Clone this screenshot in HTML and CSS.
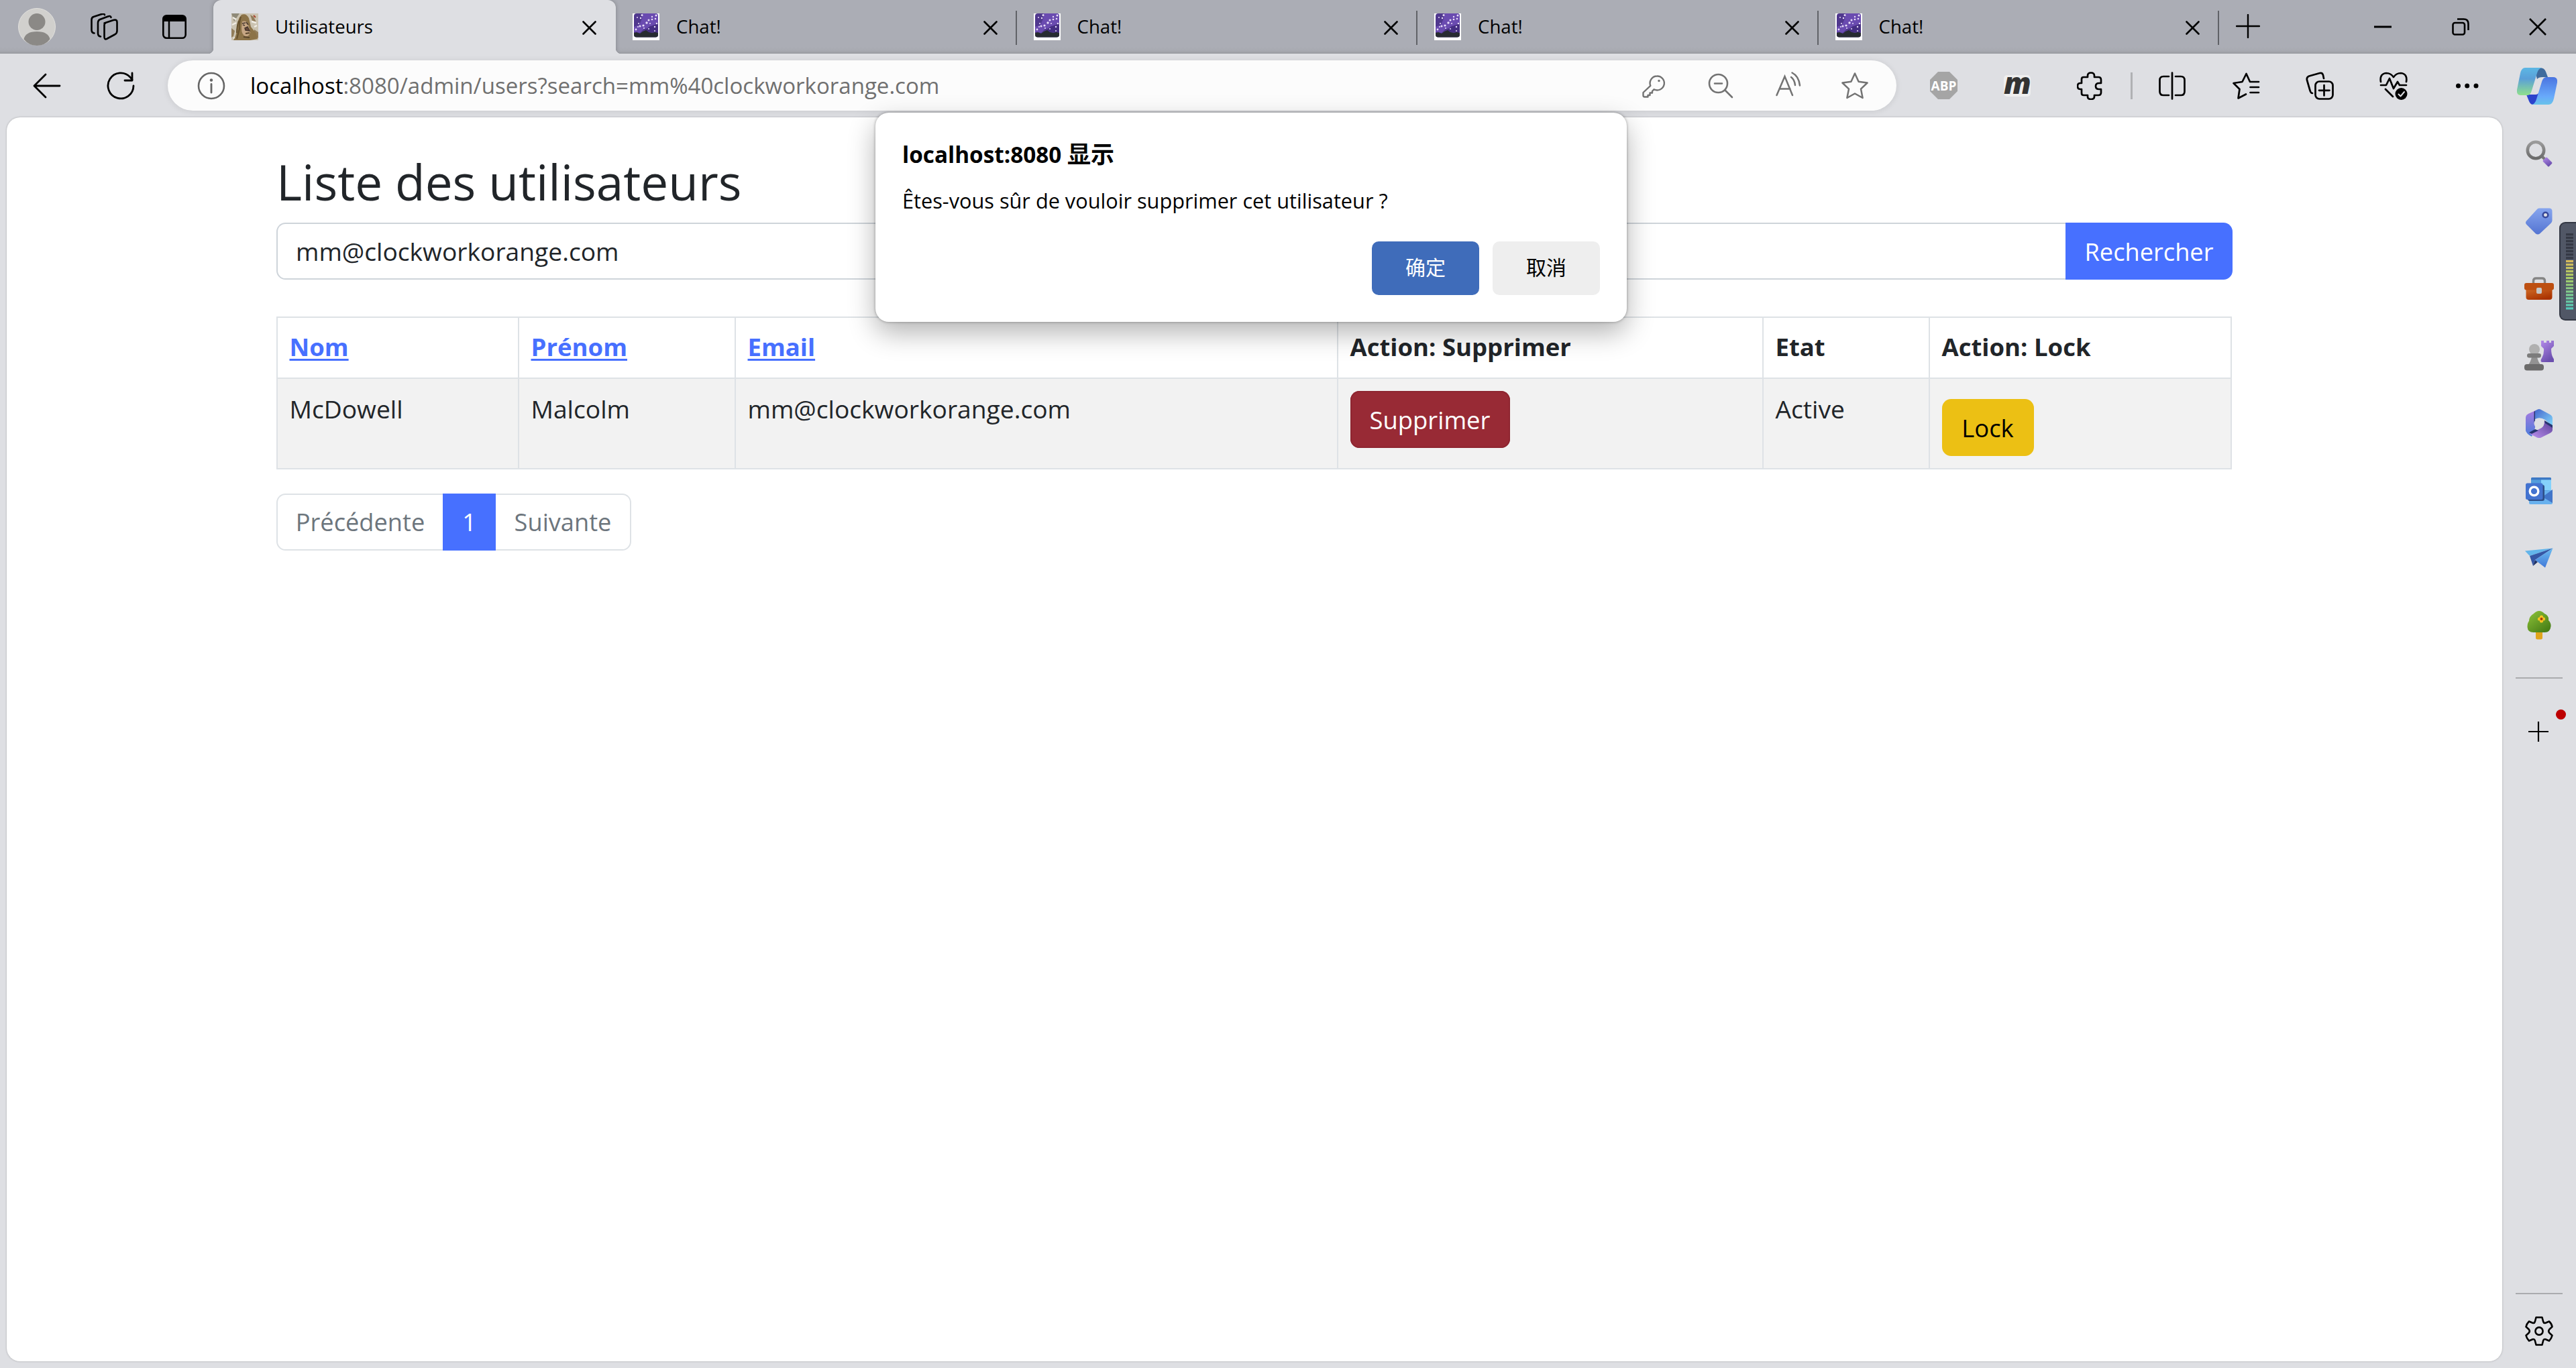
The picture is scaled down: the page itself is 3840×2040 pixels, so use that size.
FILE: index.html
```html
<!DOCTYPE html>
<html lang="fr">
<head>
<meta charset="utf-8">
<title>Utilisateurs</title>
<link rel="stylesheet" href="styles.css">
</head>
<body>
<svg class="defs" aria-hidden="true">
  <defs>
    <linearGradient id="violet" x1="0" y1="0" x2="0.5" y2="1"><stop offset="0" stop-color="#b48bea"/><stop offset="1" stop-color="#6b4fae"/></linearGradient>
    <linearGradient id="grey" x1="0" y1="0" x2="0" y2="1"><stop offset="0" stop-color="#9b9b9b"/><stop offset="1" stop-color="#6b6b6b"/></linearGradient>
    <linearGradient id="blue" x1="0" y1="0" x2="0" y2="1"><stop offset="0" stop-color="#86a5ee"/><stop offset="1" stop-color="#5474d2"/></linearGradient>
    <linearGradient id="orange" x1="0" y1="0" x2="0.6" y2="1"><stop offset="0" stop-color="#cf6a26"/><stop offset="1" stop-color="#a93200"/></linearGradient>
    <linearGradient id="leaf" x1="0" y1="0" x2="0.8" y2="1"><stop offset="0" stop-color="#8fc33a"/><stop offset="1" stop-color="#467d15"/></linearGradient>
    <linearGradient id="plane" x1="0" y1="0" x2="0" y2="1"><stop offset="0" stop-color="#6bbcf0"/><stop offset="1" stop-color="#4279d8"/></linearGradient>
    <linearGradient id="copA" x1="0" y1="0" x2="0" y2="1"><stop offset="0" stop-color="#5cb7e4"/><stop offset="0.4" stop-color="#5a9fd8"/><stop offset="1" stop-color="#8fe08c"/></linearGradient>
    <linearGradient id="copB" x1="0" y1="0" x2="0" y2="1"><stop offset="0" stop-color="#4a74e0"/><stop offset="0.7" stop-color="#68a9fb"/><stop offset="1" stop-color="#68c3ea"/></linearGradient>
    <linearGradient id="hexA" x1="0" y1="0" x2="0" y2="1"><stop offset="0" stop-color="#a67be0"/><stop offset="1" stop-color="#4a7cdb"/></linearGradient>
    <linearGradient id="hexB" x1="0" y1="0" x2="1" y2="1"><stop offset="0" stop-color="#4465cc"/><stop offset="1" stop-color="#84dafc"/></linearGradient>
    <linearGradient id="hexC" x1="0" y1="1" x2="1" y2="0"><stop offset="0" stop-color="#bd92f0"/><stop offset="1" stop-color="#5a3f98"/></linearGradient>
    <linearGradient id="meter" x1="0" y1="0" x2="0" y2="1"><stop offset="0" stop-color="#d9b95a"/><stop offset="0.35" stop-color="#a8cc66"/><stop offset="1" stop-color="#51c9bb"/></linearGradient>
    <symbol id="chat-icon" viewBox="0 0 40 40">
      <rect width="40" height="40" fill="#fff"/>
      <rect x="2" y="0" width="36" height="35.500" rx="4" fill="#50388e"/>
      <path d="M14 0h20q4 0 4 4v14l-7-1-6 5-8 1-6 6-9-1v-8l8-3 4-9z" fill="#6a4bb0"/>
      <path d="M14 29l6-5 6-5 6-1 6-5v15H14z" fill="#452e82"/>
      <path d="M2 29l4-1 5 2 4-3 5-2 4 3 5 1 5-1 4 1v3q0 3.500-4 3.500H6q-4 0-4-3.500z" fill="#272b31"/>
      <g fill="#e9def9"><circle cx="14" cy="2.500" r="1.500"/><circle cx="7" cy="6" r="1"/><circle cx="12" cy="7" r="1.200"/><circle cx="35" cy="3" r="1.500"/><circle cx="29" cy="5" r="1.200"/><circle cx="34" cy="8" r="1.300"/><circle cx="24" cy="10" r="1.500"/><circle cx="29" cy="9" r="1.300"/><circle cx="21" cy="14" r="1.700"/><circle cx="16" cy="18" r="1.600"/><circle cx="26" cy="15" r="1"/><circle cx="11" cy="19" r="1.500"/><circle cx="17" cy="22" r="1"/><circle cx="5" cy="24" r="1.400"/><circle cx="8" cy="20" r="1"/><circle cx="33" cy="20" r="1.200"/><circle cx="24" cy="23" r="1"/><circle cx="33" cy="26" r="1"/><circle cx="36" cy="15" r="1.300"/><circle cx="9" cy="15" r="1"/></g>
    </symbol>
    <symbol id="close-icon" viewBox="0 0 21 21"><path d="M1.500 1.500l18 18M19.500 1.500l-18 18" stroke="#000" stroke-width="2.600" stroke-linecap="round" fill="none"/></symbol>
  </defs>
</svg>

<header class="tabstrip">
  <div class="tabstrip-tools">
    <svg width="56" height="58" viewBox="0 0 56 58"><circle cx="28" cy="29" r="27.500" fill="#d1d0cd" stroke="#e2e1de"/><circle cx="28" cy="21.500" r="12.500" fill="#8b8986"/><path d="M8.500 47.500Q11 36 28 36t19.500 11.500Q40 57 28 57T8.500 47.500z" fill="#8b8986"/></svg>
    <svg width="41" height="40" viewBox="0 0 41 40" fill="none" stroke="#000" stroke-width="2.600" stroke-linecap="round" stroke-linejoin="round"><path d="M20.500 14.500L34 10q5.500-1.500 5.500 3v13q0 4-3.500 5.500L24 38q-3.500 1.500-3.500-3V17q0-1.800 1.500-2.500z"/><path d="M15 34.500q-4-.5-4-5V14q0-3.500 3-5l12-4.500q4-1.500 4.500 1.500"/><path d="M5.500 29.500q-4-.5-4-5V9.500q0-3.500 3-4.500L16 1.200q4.500-1.200 5 1"/></svg>
    <svg width="36" height="36" viewBox="0 0 36 36"><rect x="1.300" y="1.300" width="33.400" height="33.400" rx="5" fill="none" stroke="#000" stroke-width="2.600"/><path d="M1 10V6q0-5 5-5h24q5 0 5 5v4z"/><path d="M10 9v26" stroke="#000" stroke-width="2.500"/></svg>
  </div>
  <div class="tab tab-active">
    <svg class="favicon" viewBox="0 0 40 40"><rect width="40" height="40" fill="#cbc3b1"/><path d="M0 0h12L4 12z" fill="#8f8a79"/><path d="M28 2l5 3 4 8-6-2zM34 24l6 4v9l-7-5zM0 22l5 4-2 8-3 2z" fill="#927d5a"/><path d="M2 6l5 3M30 12l7 2M1 17l6-3M34 20l4-2M3 37l8-2" stroke="#f1eee6" stroke-width="2.500"/><path d="M33 3l3 3M35 34l3 2" stroke="#a8452f" stroke-width="2"/><path d="M15 2q7-3 11 5l3 13 8 10 2 8-11 2H3q5-8 5-18 1-14 7-20z" fill="#8c7348"/><path d="M14 5q-3 10-2 18l-4 15M11 11q-3 8-3 18" stroke="#66512e" stroke-width="2" fill="none"/><path d="M16 12q7-2 9 5l3 10q-1 8-7 7-6-2-6-12z" fill="#c6a684"/><path d="M16 15l5-1M17 17l3 1M22 13l3 4M20 22l4-2 3 6-6-1z" stroke="#47382f" stroke-width="1.500" fill="#6a4939"/><path d="M21 30l6-1M18 35l9 1" stroke="#59452b" stroke-width="2"/></svg>
    <span class="tab-title">Utilisateurs</span>
    <svg class="tab-close"><use href="#close-icon"/></svg>
  </div>
  <div class="tab"><svg class="favicon"><use href="#chat-icon"/></svg><span class="tab-title">Chat!</span><svg class="tab-close"><use href="#close-icon"/></svg></div>
  <div class="tab"><svg class="favicon"><use href="#chat-icon"/></svg><span class="tab-title">Chat!</span><svg class="tab-close"><use href="#close-icon"/></svg></div>
  <div class="tab"><svg class="favicon"><use href="#chat-icon"/></svg><span class="tab-title">Chat!</span><svg class="tab-close"><use href="#close-icon"/></svg></div>
  <div class="tab"><svg class="favicon"><use href="#chat-icon"/></svg><span class="tab-title">Chat!</span><svg class="tab-close"><use href="#close-icon"/></svg></div>
  <svg class="new-tab" width="36" height="36" viewBox="0 0 36 36"><path d="M1 18h34M18 1v34" stroke="#000" stroke-width="2.400" stroke-linecap="round"/></svg>
  <div class="window-controls">
    <svg width="26" height="26" viewBox="0 0 26 26"><path d="M0 13h26" stroke="#000" stroke-width="3"/></svg>
    <svg width="26" height="26" viewBox="0 0 26 26" fill="none" stroke="#000" stroke-width="2.600"><rect x="1.500" y="7" width="17.500" height="17.500" rx="3"/><path d="M8 1.500h9.500q7 0 7 7V18"/></svg>
    <svg width="26" height="26" viewBox="0 0 26 26"><path d="M1 1l24 24M25 1L1 25" stroke="#000" stroke-width="2.600"/></svg>
  </div>
</header>

<div class="toolbar">
  <div class="nav">
    <svg width="42" height="38" viewBox="0 0 42 38" fill="none" stroke="#000" stroke-width="2.800" stroke-linecap="round" stroke-linejoin="round"><path d="M19 2L2 19l17 17M2 19h38"/></svg>
    <svg width="42" height="42" viewBox="0 0 42 42" fill="none" stroke="#000" stroke-width="2.800" stroke-linecap="round" stroke-linejoin="round"><path d="M40 21a19 19 0 1 1-5-13l3 4"/><path d="M38 2v11H27"/></svg>
  </div>
  <div class="address">
    <svg width="42" height="42" viewBox="0 0 42 42"><circle cx="21" cy="21" r="19" fill="none" stroke="#666" stroke-width="2.600"/><circle cx="21" cy="12.500" r="2.200" fill="#666"/><path d="M21 18.500v12.500" stroke="#666" stroke-width="2.800" stroke-linecap="round"/></svg>
    <span class="url"><b>localhost</b>:8080/admin/users?search=mm%40clockworkorange.com</span>
    <div class="address-icons">
      <svg width="34" height="34" viewBox="0 0 34 34" fill="none" stroke="#737373" stroke-width="2.400" stroke-linejoin="round"><path d="M22 1.500a10.500 10.500 0 1 1-4.500 19.800L15 24v2.500h-3.500V30H8.500v2.500h-5q-2 0-2-2V26L12.300 15.800A10.500 10.500 0 0 1 22 1.500z"/><circle cx="25" cy="8.500" r="1.700" fill="#737373" stroke="none"/></svg>
      <svg width="38" height="38" viewBox="0 0 38 38" fill="none" stroke="#737373" stroke-width="2.600" stroke-linecap="round"><circle cx="15.500" cy="15.500" r="13.500"/><path d="M10 15.500h11M25.500 25.500L36 36"/></svg>
      <svg width="40" height="40" viewBox="0 0 40 40" fill="none" stroke="#737373" stroke-width="2.500" stroke-linecap="round"><path d="M2.500 36L14.500 8l11.500 28M6.500 26.500h16"/><path d="M24 9q5 3.500 6 12M25.500 2.500q10 5 11.500 19"/></svg>
      <svg width="42" height="42" viewBox="0 0 42 42" fill="none" stroke="#737373" stroke-width="2.500" stroke-linejoin="round"><path d="M21 2.500l5.600 12.300 13 1.700-9.600 9.200 2.600 13.300L21 32.500 9.400 39 12 25.700l-9.600-9.200 13-1.700z"/></svg>
    </div>
  </div>
  <div class="extensions">
    <div class="cell"><svg width="41" height="41" viewBox="0 0 41 41"><path d="M12 0h17l12 12v17L29 41H12L0 29V12z" fill="#a5a5a5"/><text x="20.500" y="27.500" class="abp">ABP</text></svg></div>
    <div class="cell"><span class="m-badge">m</span></div>
    <div class="cell puzzle"><svg width="42" height="42" viewBox="0 0 42 42" fill="none" stroke="#000" stroke-width="2.700" stroke-linejoin="round"><path d="M10 8h6V6q0-4.500 5-4.500T26 6v2h6q4 0 4 4v5h-3q-5 0-5 4.500t5 4.500h3v5q0 4-4 4h-6v2q0 4-5 4t-5-4v-2h-6q-3 0-3-3v-6H5q-4 0-4-4.500T5 17h2v-6q0-3 3-3z"/></svg></div>
    <i class="divider"></i>
    <div class="cell"><svg width="40" height="42" viewBox="0 0 40 42" fill="none" stroke="#000" stroke-width="2.700" stroke-linecap="round"><path d="M15 7H7q-5.500 0-5.500 5.500v17Q1.500 35 7 35h8M25 7h8q5.500 0 5.500 5.500v17Q38.500 35 33 35h-8M20 1.500v39"/></svg></div>
    <div class="cell"><svg width="42" height="42" viewBox="0 0 42 42" fill="none" stroke="#000" stroke-width="2.700" stroke-linecap="round" stroke-linejoin="round"><path d="M40 15H27L21.500 3 15.500 15l-13 2 9 9-2 13.500L21 33.500M27.500 23H40M27.500 31H40"/></svg></div>
    <div class="cell"><svg width="42" height="42" viewBox="0 0 42 42" fill="none" stroke="#000" stroke-width="2.700" stroke-linecap="round" stroke-linejoin="round"><path d="M10 32q-2.500 0-3.500-4L2 12.500Q1 8 5 6.500L21 2q4-1 5 3l1 5"/><rect x="14.500" y="14.500" width="26" height="26" rx="6"/><path d="M27.500 20v15.500M20 27.800h15.500"/></svg></div>
    <div class="cell"><svg width="42" height="42" viewBox="0 0 42 42" fill="none" stroke="#000" stroke-width="2.700" stroke-linecap="round" stroke-linejoin="round"><path d="M2 15Q0 3 10 2q7 0 11 6 4-6 11-6 10 1 8 13M2 20h8l5-10 6 15 6-10 3 5h10M9 26l11 11"/><circle cx="32.500" cy="33" r="9" fill="#000" stroke="none"/><path d="M28.500 33.500l3 3 5.500-6.500" stroke="#dedfe3" stroke-width="2"/></svg></div>
    <div class="cell"><svg width="36" height="10" viewBox="0 0 36 10"><circle cx="4.500" cy="5" r="3.500"/><circle cx="17.700" cy="5" r="3.500"/><circle cx="31" cy="5" r="3.500"/></svg></div>
    <div class="copilot"><svg width="60" height="55" viewBox="0 0 60 55"><path d="M34 0q7 0 9 6l3 8h-8q-6 0-8 3l-3-12z" fill="#3f6b9d"/><path d="M14 40h14q3 0 6-4l-5 15q-2 4-5 4-4 0-6-5z" fill="#2c43cc"/><path d="M12 0h25q-5 1-7 8l-8 26q-2 7-6 7H6q-7 0-6-8L5 8q2-8 7-8z" fill="url(#copA)"/><path d="M44 14h10q7 0 6 8l-5 24q-2 9-8 9H22q5-1 7-8l8-26q2-7 7-7z" fill="url(#copB)"/></svg></div>
  </div>
</div>

<div class="workspace">
  <main class="page">
    <div class="container">
      <h1>Liste des utilisateurs</h1>
      <form class="search">
        <div class="search-field">mm@clockworkorange.com</div>
        <div class="search-button">Rechercher</div>
      </form>
      <table class="users">
        <colgroup><col class="c-nom"><col class="c-prenom"><col class="c-email"><col class="c-suppr"><col class="c-etat"><col class="c-lock"></colgroup>
        <thead><tr><th><a>Nom</a></th><th><a>Prénom</a></th><th><a>Email</a></th><th>Action: Supprimer</th><th>Etat</th><th>Action: Lock</th></tr></thead>
        <tbody><tr><td>McDowell</td><td>Malcolm</td><td>mm@clockworkorange.com</td><td><div class="btn btn-danger">Supprimer</div></td><td>Active</td><td><div class="btn btn-warning">Lock</div></td></tr></tbody>
      </table>
      <nav class="pagination"><span class="prev">Précédente</span><span class="current">1</span><span class="next">Suivante</span></nav>
    </div>
  </main>
  <aside class="sidebar">
    <div class="side-cell"><svg width="40" height="40" viewBox="0 0 40 40"><circle cx="15" cy="15" r="12.200" fill="none" stroke="url(#grey)" stroke-width="4.600"/><path d="M23 26l3-3 4 4-3 3z" fill="#777"/><path d="M26 30l4-4q1-1 2 0l7 7q1 1 0 2l-4 4q-1 1-2 0l-7-7q-1-1 0-2z" fill="url(#violet)"/></svg></div>
    <div class="side-cell"><svg width="40" height="40" viewBox="0 0 40 40"><path d="M20 .5h15q4.500 0 4.500 4.500v14q0 2-2 4L21 38.500q-3 2-6 0l-14-14q-2-2.500 0-5L17 2q1-1.500 3-1.500z" fill="url(#blue)"/><circle cx="29.500" cy="10.500" r="3.800" fill="#dedfe3" stroke="#37489a" stroke-width="2.600"/></svg></div>
    <div class="side-cell"><svg width="44" height="34" viewBox="0 0 44 34"><path d="M13.500 10V6q0-4 4-4h9q4 0 4 4v4" fill="none" stroke="#858585" stroke-width="3.400"/><path d="M2.500 18h39v12q0 4-4 4h-31q-4 0-4-4z" fill="url(#orange)"/><rect x="0" y="9" width="44" height="10.500" rx="3" fill="#bd4f11"/><rect x="18" y="16" width="8" height="9" rx="2" fill="#c6c6c6"/></svg></div>
    <div class="side-cell"><svg width="44" height="46" viewBox="0 0 44 46"><path d="M25 0h4v3h4V0h4v3h3V0h4v8l-4 4q0 9 3 14 1.500 2 1.500 4 0 2-2 2H26.500q-2 0-2-2 0-2 2-5 3-5 2.500-13l-4-4z" fill="url(#violet)"/><circle cx="15" cy="13" r="8" fill="#b0b0b0"/><path d="M11 24h8q1 7 6 13H5q5-6 6-13z" fill="#929292"/><rect x="4" y="19" width="21" height="6.500" rx="3.200" fill="#7c7c7c"/><rect x="0" y="35" width="29" height="9.500" rx="4" fill="#6b6b6b"/></svg></div>
    <div class="side-cell"><svg width="40" height="43" viewBox="0 0 40 43"><path d="M14 2.500V28L9 41Q1 37 0 32V13q0-4 4-6z" fill="url(#hexA)"/><path d="M14 2.500l4-2q2-1 4 0L36 8q4 2 4 6v12L29 16q-8-5-15-1z" fill="url(#hexB)"/><path d="M40 26v5q0 3-4 5l-13 6.500q-3 1.500-6 0L6 37l14-7q8-3 8-13z" fill="url(#hexC)"/><path d="M14 2.500L12.500 4v16l1.500-2zM5 35l4 2 10-5-5-2zM28 17l1 4 11 7v-4z" fill="#26356f"/><circle cx="20" cy="21.500" r="7.500" fill="#dedfe3"/></svg></div>
    <div class="side-cell"><svg width="41" height="40" viewBox="0 0 41 40"><rect x="8" y="0" width="30" height="20" rx="2" fill="#539ddd"/><path d="M23 3h15v16H23z" fill="#85d2fb"/><path d="M8 2q0-2 2-2h26q2 0 2 2v1.500H8z" fill="#3d78c4"/><path d="M5 20h20l15-1v19q0 2-2 2H7q-2 0-2-2z" fill="#68b1ee"/><path d="M25 29l15-11v20z" fill="#4175c9"/><rect x="3" y="11" width="25" height="24" rx="3" fill="#2d4e87"/><rect x="0" y="8.500" width="25.500" height="24.500" rx="2.500" fill="#4373d0"/><circle cx="12.500" cy="20.500" r="6.300" fill="none" stroke="#fff" stroke-width="3.400"/></svg></div>
    <div class="side-cell"><svg width="42" height="30" viewBox="0 0 42 30"><path d="M0 4.500L41.500 .5 7 12z" fill="#63b5ea"/><path d="M7 12L41.500 .5 15 18l-3 9z" fill="#3557a5"/><path d="M12 27l3-9 4 3z" fill="#203264"/><path d="M41.500 .5L30 29.500 15 18z" fill="url(#plane)"/></svg></div>
    <div class="side-cell"><svg width="36" height="43" viewBox="0 0 36 43"><path d="M13 30h10v10q0 2.500-2.500 2.500h-5Q13 42.500 13 40z" fill="#e0a51c"/><path d="M10 4q8-8 16 0 7 3 6 10 4 4 3.500 9-1 9-9 9h-17Q1 32 .5 24q0-6 2.500-9Q3 8 10 4z" fill="url(#leaf)"/><g fill="#f5c322"><circle cx="21.500" cy="9" r="2.600"/><circle cx="21.500" cy="15" r="2.600"/><circle cx="18.500" cy="12" r="2.600"/><circle cx="24.500" cy="12" r="2.600"/></g><circle cx="21.500" cy="12" r="2" fill="#a53a0e"/></svg></div>
    <i class="rule"></i>
    <div class="side-add"><svg width="30" height="30" viewBox="0 0 30 30"><path d="M0 15h30M15 0v30" stroke="#000" stroke-width="2.200"/></svg><i class="badge"></i></div>
    <i class="rule rule-bottom"></i>
    <div class="side-gear"><svg width="42" height="44" viewBox="0 0 42 44" fill="none" stroke="#000" stroke-width="2.600" stroke-linejoin="round"><path d="M16.500 1.500h9l1.700 6.500q.8 2.500 3.500 1.800l5.300-2.300q4 4 4.500 8l-4.300 4q-2 2.500 0 5l4.300 4q-1 4.500-4.500 8l-5.300-2.300q-2.700-.7-3.500 1.800l-1.700 6.500h-9L14.800 36q-.8-2.500-3.500-1.800L6 36.500q-3.500-3.500-4.500-8l4.300-4q2-2.500 0-5l-4.300-4q1-4.500 4.500-8l5.300 2.300q2.700.7 3.500-1.800z"/><circle cx="21" cy="22" r="5.600"/></svg></div>
  </aside>
</div>

<div class="meter"><svg width="25" height="147" viewBox="0 0 25 147"><g stroke-width="11" stroke-dasharray="3.200 1.820" fill="none"><path d="M15.500 17v40" stroke="#353945"/></g><rect x="10" y="57" width="11" height="74" fill="url(#meter)"/><path d="M15.500 60.200v72" stroke="#515766" stroke-width="11" stroke-dasharray="1.820 3.200"/></svg></div>

<div class="dialog">
  <p class="dialog-title">localhost:8080 <span lang="zh">显示</span></p>
  <p class="dialog-text">Êtes-vous sûr de vouloir supprimer cet utilisateur ?</p>
  <div class="dialog-actions"><div class="dialog-ok" lang="zh">确定</div><div class="dialog-cancel" lang="zh">取消</div></div>
</div>
</body>
</html>
```
FILE: styles.css
```css
* { box-sizing: border-box; }
html, body { margin: 0; height: 100%; overflow: hidden; }
body {
  display: flex;
  flex-direction: column;
  width: 3840px;
  height: 2040px;
  background: #dedfe3;
  color: #212529;
  font-family: "Open Sans", "Noto Sans CJK SC", sans-serif;
}
svg { display: block; flex: none; }
.defs { position: absolute; width: 0; height: 0; }
h1, p { margin: 0; }

/* tab strip */
.tabstrip {
  display: flex;
  align-items: stretch;
  height: 80px;
  background: linear-gradient(#abadb5 70px, #a7a9b0 76px, #97999f 80px);
}
.tabstrip-tools {
  display: flex;
  align-items: center;
  width: 318px;
  padding-left: 27px;
}
.tabstrip-tools svg:nth-child(2) { margin: 0 66px 0 52px; }
.tab {
  position: relative;
  display: flex;
  align-items: center;
  width: 597.500px;
  padding: 0 29px 0 25px;
  color: #000;
}
.tab:not(.tab-active)::after {
  content: "";
  position: absolute;
  right: 0;
  top: 16px;
  width: 2px;
  height: 51px;
  background: #606267;
}
.tab-active {
  width: 600px;
  padding: 0 29px 0 27px;
  background: #dedfe3;
  border-radius: 12px 12px 0 0;
  box-shadow: 0 0 6px rgba(0, 0, 0, 0.250);
  clip-path: inset(0 -8px 0 -8px);
}
.tab-active::before, .tab-active::after {
  content: "";
  position: absolute;
  bottom: 0;
  width: 8px;
  height: 8px;
}
.tab-active::before { left: -8px; background: radial-gradient(circle at 0 0, transparent 8px, #dedfe3 8.500px); }
.tab-active::after { right: -8px; background: radial-gradient(circle at 100% 0, transparent 8px, #dedfe3 8.500px); }
.favicon { width: 40px; height: 40px; }
.tab-title { flex: 1; margin: -2px 0 0 25px; font-size: 27.600px; line-height: 40px; }
.tab-close { width: 21px; height: 21px; margin-top: 2px; }
.new-tab { align-self: center; margin: -2px 0 0 25px; }
.window-controls {
  display: flex;
  align-items: center;
  gap: 89.500px;
  margin: -1px 0 0 170px;
}

/* toolbar */
.toolbar { display: flex; height: 95px; align-items: center; }
.nav { display: flex; align-items: center; gap: 68px; width: 250px; padding-left: 49px; }
.address {
  display: flex;
  align-items: center;
  width: 2577px;
  height: 75px;
  padding: 0 12px 0 44px;
  border-radius: 38px;
  background: #fcfcfc;
  box-shadow: 0 1px 10px rgba(0, 0, 0, 0.100);
}
.url { flex: 1; margin-left: 37px; color: #707070; font-size: 33.050px; line-height: 46px; }
.url b { color: #000; font-weight: 400; }
.address-icons { display: flex; align-items: center; }
.address-icons svg { margin: 0 30px; }
.address-icons svg:nth-child(1) { margin: 2px 33px 0; }
.address-icons svg:nth-child(2) { margin: 0 31px; }
.address-icons svg:nth-child(3) { margin: -3px 29px 0 31px; }
.address-icons svg:nth-child(4) { margin: 0 29px; }
.extensions { display: flex; align-items: center; margin-left: 15px; }
.cell { display: flex; justify-content: center; align-items: center; width: 110px; height: 75px; }
.puzzle { width: 114px; padding-right: 4px; }
.divider { width: 3px; height: 40px; margin-right: 4px; background: #b0b1b4; }
.abp { font: bold 19px "Open Sans", sans-serif; fill: #fff; text-anchor: middle; }
.m-badge {
  width: 40px;
  height: 32px;
  border-radius: 5px;
  background: #efefef;
  color: #333;
  font: italic 800 44px/23px "Open Sans", sans-serif;
  text-align: center;
}
.copilot { display: flex; justify-content: center; width: 104px; margin: 2px 0 0 -3px; }

/* content area */
.workspace { display: flex; flex: 1; padding: 0 0 10px 10px; }
.page {
  width: 3720px;
  padding-top: 53px;
  border-radius: 20px;
  background: #fff;
  box-shadow: 0 0 3px rgba(0, 0, 0, 0.250);
}
.container { width: 2916px; margin: 0 auto; font-size: 37.200px; line-height: 54px; }
h1 { margin-bottom: 18px; font-size: 72.900px; font-weight: 400; line-height: 86px; }
.search { display: flex; height: 85px; margin: 0 0 54.500px; }
.search-field {
  flex: 1;
  padding: 14px 27px;
  border: 2px solid #ced4da;
  border-right: 0;
  border-radius: 13.500px 0 0 13.500px;
}
.search-button {
  width: 249px;
  padding-top: 16px;
  border-radius: 0 13.500px 13.500px 0;
  background: #4770ff;
  color: #fff;
  font-size: 36.200px;
  text-align: center;
}
.users { width: 2915px; margin-left: -0.500px; border-collapse: collapse; table-layout: fixed; }
.c-nom { width: 360px; }
.c-prenom { width: 323px; }
.c-email { width: 898px; }
.c-suppr { width: 634px; }
.c-etat { width: 248px; }
.c-lock { width: 450px; }
th, td { padding: 18px 18px 18px; border: 2px solid #dee2e6; text-align: left; vertical-align: top; }
th { padding: 16.500px 18px 18.500px; font-size: 36.500px; font-weight: 700; }
th a { color: #4770ff; text-decoration: underline; text-decoration-thickness: 3px; text-underline-offset: 4px; }
td { background: #f2f2f2; }
.btn {
  height: 85px;
  padding-top: 16px;
  border-radius: 13.500px;
  font-size: 36.400px;
  text-align: center;
}
.btn-danger { width: 238px; background: #982a35; box-shadow: inset 0 0 0 2px #8e2530; color: #fff; }
.btn-warning { width: 137px; margin-top: 12px; background: #ecc014; color: #000; }
.pagination { display: flex; width: 529px; height: 85px; margin-top: 36px; color: #6c757d; font-size: 36.200px; }
.pagination span { padding-top: 13.500px; border: 2px solid #dee2e6; text-align: center; }
.prev { width: 248px; border-radius: 13.500px 0 0 13.500px; border-right: 0 !important; }
.pagination .current { width: 79px; border-color: #4770ff; background: #4770ff; color: #fff; }
.next { width: 202px; border-radius: 0 13.500px 13.500px 0; border-left: 0 !important; }

/* sidebar */
.sidebar { display: flex; flex-direction: column; align-items: center; width: 110px; padding: 4px 0 0; }
.side-cell { display: flex; align-items: center; height: 100.500px; }
.rule { width: 70px; height: 2px; margin-top: 27px; background: #aaabae; }
.side-add { position: relative; margin: 64px 2px 0 0; }
.badge { position: absolute; left: 41px; top: -18px; width: 15px; height: 15px; border-radius: 50%; background: #bd0000; }
.rule-bottom { margin-top: auto; }
.side-gear { margin: 33px 0 23px; }

/* volume meter docked on the screen edge */
.meter {
  position: absolute;
  right: 0;
  top: 331px;
  width: 25px;
  height: 147px;
  border: solid #333743;
  border-width: 2.500px 0 2.500px 2.500px;
  border-radius: 9px 0 0 9px;
  background: #515766;
}
.meter svg { margin: -2.500px 0 0 -2.500px; }

/* confirmation dialog */
.dialog {
  position: absolute;
  left: 1305px;
  top: 168px;
  width: 1120px;
  height: 312px;
  padding: 39px 40px 40px;
  border-radius: 20px;
  background: #fff;
  color: #000;
  box-shadow: 0 0 4px rgba(0, 0, 0, 0.350), 0 16px 40px rgba(0, 0, 0, 0.300);
}
.dialog-title { height: 46px; font-size: 33.300px; font-weight: 700; line-height: 46px; }
.dialog-title span { font-size: 35px; }
.dialog-text { margin-top: 26px; font-size: 30.700px; line-height: 40px; }
.dialog-actions { display: flex; justify-content: flex-end; gap: 20px; margin-top: 41px; }
.dialog-actions div { width: 160px; height: 80px; border-radius: 10px; font-size: 30px; line-height: 78px; text-align: center; }
.dialog-ok { background: #3f6cba; color: #fff; }
.dialog-cancel { background: #eee; }
```
